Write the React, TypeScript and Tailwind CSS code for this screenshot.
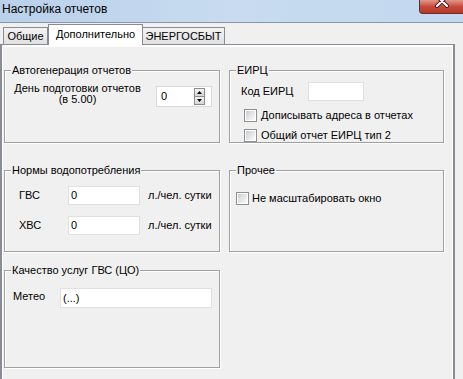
import React from "react";

const Check = () => (
  <span className="w-[13px] h-[13px] shrink-0 border border-[#8e8f8f] bg-white p-[1px] flex">
    <span className="flex-1 bg-gradient-to-br from-[#cbced3] via-[#e4e5e7] to-[#fbfbfb]" />
  </span>
);

function Group({
  title,
  className,
  children,
}: {
  title: string;
  className: string;
  children?: React.ReactNode;
}) {
  return (
    <fieldset
      className={
        "border border-[#a0a0a0] shadow-[inset_1px_1px_0_#fff,1px_1px_0_#fff] min-w-0 " +
        className
      }
    >
      <legend className="ml-[6px] px-[1px] leading-[13px] bg-[#f0f0f0] relative">{title}</legend>
      {children}
    </fieldset>
  );
}

const SpinBtn = ({ up }: { up?: boolean }) => (
  <div
    className={
      "w-[11px] h-[9px] border border-[#8c8c8c] bg-gradient-to-b from-[#f6f6f6] to-[#d6d6d6] flex items-center justify-center " +
      (up ? "" : "-mt-[1px]")
    }
  >
    <svg width="5" height="3" viewBox="0 0 5 3">
      {up ? <polygon points="2.5,0 5,3 0,3" fill="#000" /> : <polygon points="0,0 5,0 2.5,3" fill="#000" />}
    </svg>
  </div>
);

export default function App() {
  return (
    <div className="w-[463px] h-[379px] overflow-hidden bg-[#f0f0f0] flex flex-col text-[11px] leading-[13px] text-black font-['Liberation_Sans',Arial,sans-serif]">
      {/* Title bar */}
      <div className="h-[23px] shrink-0 border-b border-[#8a97a5] bg-gradient-to-r from-[#b9d1ea] via-[#c8dbf0] to-[#c2d8ee] flex justify-between">
        <span className="pl-[2px] text-[12px] leading-[19px]">Настройка отчетов</span>
        <div className="w-[44px] h-[14px] rounded-bl-[4px] border-l border-b border-[#6e2b22] bg-gradient-to-b from-[#e2968a] via-[#c94a3b] to-[#b5392b] flex justify-center">
          <svg width="20" height="13" viewBox="0 0 20 13">
            <path d="M5 -4 L15 6 M15 -4 L5 6" stroke="#4a1a14" strokeWidth="4" strokeLinecap="round" />
            <path d="M5 -4 L15 6 M15 -4 L5 6" stroke="#fff" strokeWidth="2.2" strokeLinecap="round" />
          </svg>
        </div>
      </div>

      {/* Tabs */}
      <div className="h-[21px] shrink-0 flex items-end pl-[3px] relative z-10">
        <div className="w-[45px] h-[17px] border border-b-0 border-[#898c95] bg-gradient-to-b from-[#f3f3f3] to-[#e1e1e1] flex items-center justify-center">
          Общие
        </div>
        <div className="w-[95px] h-[21px] -mb-[1px] border border-b-0 border-[#898c95] bg-white flex items-center justify-center pb-[2px]">
          Дополнительно
        </div>
        <div className="w-[82px] h-[17px] border border-l-0 border-b-0 border-[#898c95] bg-gradient-to-b from-[#f3f3f3] to-[#e1e1e1] flex items-center justify-center">
          ЭНЕРГОСБЫТ
        </div>
      </div>

      {/* Panel */}
      <div className="flex-1 w-[455px] border-l-2 border-t border-r-2 border-[#898c95] bg-white pt-[2px] pr-[1px] pl-[1px] flex flex-col min-h-0">
        <div className="flex-1 bg-[#f0f0f0] pl-[1px] pt-[17px] flex flex-col">
          {/* Row 1 */}
          <div className="flex gap-[9px] h-[79px] shrink-0">
            <Group title="Автогенерация отчетов" className="w-[216px] h-full">
              <div className="flex items-start pl-[8px]">
                <div className="w-[129px] mt-[6px] text-center leading-[11px]">
                  День подготовки отчетов
                  <br />
                  (в 5.00)
                </div>
                <div className="w-[56px] h-[21px] ml-[14px] mt-[9px] bg-white border border-[#d9d9d9] flex items-center pl-[4px] pr-[6px]">
                  <span className="flex-1">0</span>
                  <div className="flex flex-col w-[11px]">
                    <SpinBtn up />
                    <SpinBtn />
                  </div>
                </div>
              </div>
            </Group>
            <Group title="ЕИРЦ" className="w-[215px] h-full">
              <div className="pl-[11px] pt-[5px] flex items-center">
                <span className="w-[67px]">Код ЕИРЦ</span>
                <div className="w-[56px] h-[19px] bg-white border border-[#e0e0e0]" />
              </div>
              <div className="pl-[14px] mt-[8px] flex items-center gap-[4px] h-[13px]">
                <Check />
                <span>Дописывать адреса в отчетах</span>
              </div>
              <div className="pl-[14px] mt-[7px] flex items-center gap-[4px] h-[13px]">
                <Check />
                <span>Общий отчет ЕИРЦ тип 2</span>
              </div>
            </Group>
          </div>

          {/* Row 2 */}
          <div className="flex gap-[9px] h-[88px] mt-[21px] shrink-0">
            <Group title="Нормы водопотребления" className="w-[216px] h-full">
              <div className="pl-[14px] pt-[9px] flex items-center">
                <span className="w-[49px]">ГВС</span>
                <div className="w-[72px] h-[19px] bg-white border border-[#e0e0e0] pl-[2px] leading-[17px]">0</div>
                <span className="ml-[8px]">л./чел. сутки</span>
              </div>
              <div className="pl-[14px] mt-[11px] flex items-center">
                <span className="w-[49px]">ХВС</span>
                <div className="w-[72px] h-[19px] bg-white border border-[#e0e0e0] pl-[2px] leading-[17px]">0</div>
                <span className="ml-[8px]">л./чел. сутки</span>
              </div>
            </Group>
            <Group title="Прочее" className="w-[215px] h-full">
              <div className="pl-[6px] mt-[15px] flex items-center gap-[3px] h-[13px]">
                <Check />
                <span>Не масштабировать окно</span>
              </div>
            </Group>
          </div>

          {/* Row 3 */}
          <div className="flex h-[104px] mt-[12px] shrink-0">
            <Group title="Качество услуг ГВС (ЦО)" className="w-[216px] h-full">
              <div className="pl-[8px] pt-[11px] flex items-start">
                <span className="w-[47px] mt-[2px]">Метео</span>
                <div className="w-[152px] h-[20px] bg-white border border-[#e0e0e0] pl-[2px] leading-[18px]">(...)</div>
              </div>
            </Group>
          </div>
        </div>
      </div>
    </div>
  );
}
